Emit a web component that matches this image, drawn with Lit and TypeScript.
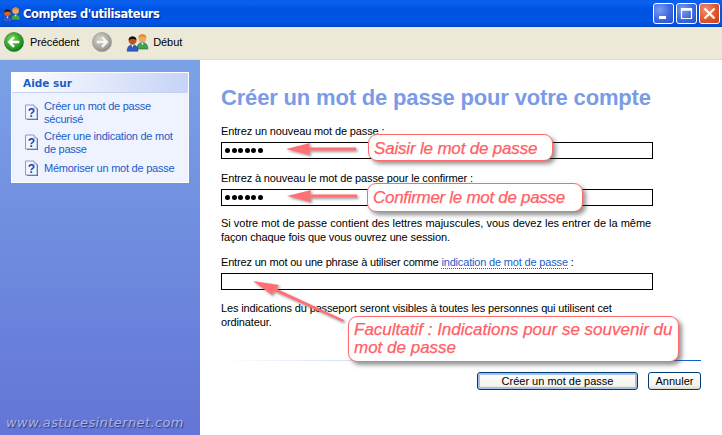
import { LitElement, html, css, svg } from "lit";
import { customElement } from "lit/decorators.js";

const person = (x: number, y: number, head: string, hair: string, body: string, s = 1) => svg`
  <g transform="translate(${x} ${y}) scale(${s})">
    <path d="M0.5 14.5 C0.5 10 3 8.5 5.5 8.5 C8 8.5 10.5 10 10.5 14.5 Z" fill="${body}" stroke="#234" stroke-width=".4"/>
    <path d="M4.5 8.8 L5.5 11 L6.5 8.8 Z" fill="#fff"/>
    <circle cx="5.5" cy="4.5" r="3.6" fill="${head}"/>
    <path d="M1.9 4.5 A3.6 3.6 0 0 1 9.1 4.5 C7.5 2.8 4 2.8 1.9 4.5 Z" fill="${hair}"/>
  </g>`;

const users = (size: number) => html`<svg class="ti" width=${size} height=${size} viewBox="0 0 22 22">
  ${person(9.5, 3, "#f0a860", "#e08a30", "#3fa44a")}
  ${person(0.5, 5, "#d8651c", "#111", "#3558c8")}
</svg>`;

const helpIcon = html`<svg class="hi" width="16" height="18" viewBox="0 0 16 18">
  <path d="M3 2 H11 L14 5 V16 H3 Z" fill="#4a5a78"/>
  <path d="M1.5 1 H10 L13 4 V15 H1.5 Z" fill="#f2f6ff" stroke="#8a9cc0" stroke-width="1"/>
  <path d="M10 1 V4 H13" fill="#d5def0" stroke="#8a9cc0" stroke-width=".7"/>
  <text x="7.2" y="13.4" text-anchor="middle" font-family="Liberation Sans" font-weight="700" font-size="12" fill="#1c3fae">?</text>
</svg>`;

@customElement("app-root")
export class AppRoot extends LitElement {
  static styles = css`
    :host { display: block; width: 722px; height: 435px; position: relative; overflow: hidden; background: #fff;
      font-family: "Liberation Sans", Arial, sans-serif; font-size: 11px; color: #000; }
    .title { height: 27px; box-sizing: border-box; display: flex; align-items: center; padding: 0 2px 0 2px;
      background: linear-gradient(180deg, #0a5ce8 0%, #0a62f0 10%, #0054e3 30%, #0054e3 80%, #0050d8 92%, #0042c0 100%); }
    .ti { margin-right: 1px; }
    .title b { font-family: "DejaVu Sans", sans-serif; font-size: 11.5px; color: #fff; font-weight: 700; letter-spacing: -.46px; text-shadow: 1px 1px 1px #00208a; flex: 1; }
    .wb { width: 21px; height: 21px; box-sizing: border-box; border: 1px solid #fff; border-radius: 3px; margin-left: 2px;
      background: radial-gradient(circle at 30% 30%, #7d9cf0 0%, #3c68e0 55%, #2a50c8 100%); display: flex; align-items: center; justify-content: center; }
    .wb.x { background: radial-gradient(circle at 30% 30%, #ee9070 0%, #e0562c 55%, #c83c14 100%); }
    .tool { height: 33px; box-sizing: border-box; background: #ece9d8; border-bottom: 1px solid #e0dcc4; display: flex; align-items: center; padding: 0 0 2px 4px; font-size: 11px; letter-spacing: -.1px; }
    .tool span { margin-left: 6px; }
    .tool .fw { margin-left: 13px; }
    .tool .us { margin-left: 14px; }
    .tool .deb { margin-left: 3px; }
    .main { display: flex; height: 375px; }
    .side { width: 200px; flex: none; box-sizing: border-box; padding: 12px 11px; background: linear-gradient(180deg, #7ba2e7 0%, #6375d6 100%); position: relative; }
    .panel { border: 1px solid #fff; background: #eff3ff; height: 111px; box-sizing: border-box; }
    .panel h3 { margin: 0; height: 20px; box-sizing: border-box; padding: 4px 0 0 11px; font-family: "DejaVu Sans", sans-serif; font-size: 10.5px; font-weight: 700; color: #215dc6;
      background: linear-gradient(90deg, #fff 0%, #c6d3f7 100%); border-bottom: 1px solid #c6d3f7; }
    .panel ul { list-style: none; margin: 0; padding: 7px 0 0 12px; }
    .panel li { display: flex; gap: 4px; color: #215dc6; line-height: 13px; width: 158px; margin-bottom: 4px; letter-spacing: -.24px; }
    .hi { flex: none; margin-top: 4px; }
    .panel li.one { align-items: center; }
    .panel li.one .hi { margin-top: 0; }
    .panel li.one div { margin-top: -1px; }
    .wm { position: absolute; left: 6px; bottom: 5px; font-family: "DejaVu Sans", sans-serif; font-style: italic; font-size: 13px; color: #a9b4e6; letter-spacing: .4px; text-shadow: 1px 1px 1px #2e3a7c; }
    .content { flex: 1; padding: 24px 21px 0; position: relative; }
    h1 { margin: 0; font-size: 22px; line-height: 28px; font-weight: 700; color: #7b9be6; letter-spacing: -.17px; white-space: nowrap; }
    .lbl { margin-top: 12px; line-height: 14px; letter-spacing: -.13px; white-space: nowrap; }
    .lbl.l3 { margin-top: 11px; letter-spacing: -.17px; }
    .inp { width: 432px; height: 17px; box-sizing: border-box; border: 1px solid #000; margin-top: 4px; padding-left: 3px; display: flex; align-items: center; gap: 1.6px; }
    .dot { width: 5px; height: 5px; background: #000; border-radius: 50%; }
    .p { width: 460px; line-height: 14px; margin-top: 10px; white-space: nowrap; }
    .p.p2 { margin-top: 11px; }
    .p span { display: block; letter-spacing: -.13px; }
    .p span.w { letter-spacing: -.01px; }
    .a { color: #215dc6; border-bottom: 1px dotted #215dc6; }
    .rule { height: 1px; width: 480px; margin-top: 31px; background: linear-gradient(90deg, #fff 0%, #a8c4f0 55%, #0a5ad8 100%); }
    .btns { display: flex; justify-content: flex-end; gap: 10px; width: 480px; margin-top: 11px; }
    .btn { height: 18px; box-sizing: border-box; border: 1px solid #003c74; border-radius: 3px; background: linear-gradient(180deg, #fff, #f4f3ec 80%, #dcd8c8); display: flex; align-items: center; justify-content: center; color: #000; }
    .btn.def { width: 161px; box-shadow: inset 0 0 0 2px #a5bfe8; }
    .btn.can { width: 53px; }
    .arrows { position: absolute; left: 0; top: 0; pointer-events: none; }
    .call { position: absolute; box-sizing: border-box; background: #fff; border: 1px solid #ff6a6a; border-radius: 9px; box-shadow: 3px 3px 4px rgba(60,60,60,.55);
      color: #ff6066; font-style: italic; font-size: 17px; line-height: 18px; white-space: nowrap; -webkit-text-stroke: .25px #ff6066; }
    .c1 { left: 368px; top: 134px; width: 185px; height: 27px; padding: 5px 0 0 5px; letter-spacing: -.18px; }
    .c2 { left: 367px; top: 183px; width: 216px; height: 29px; padding: 5px 0 0 5px; letter-spacing: -.3px; }
    .c3 { left: 348px; top: 316px; width: 331px; height: 46px; padding: 4px 0 0 5px; }
  `;

  private dots() {
    return html`<div class="inp">${[0, 1, 2, 3, 4, 5].map(() => html`<i class="dot"></i>`)}</div>`;
  }

  render() {
    return html`
      <div class="title">
        ${users(20)}
        <b>Comptes d'utilisateurs</b>
        <div class="wb"><svg width="13" height="13" viewBox="0 0 13 13"><rect x="2" y="9" width="7" height="3" fill="#fff"/></svg></div>
        <div class="wb"><svg width="13" height="13" viewBox="0 0 13 13"><path d="M1.5 1.5 H11.5 V11.5 H1.5 Z M1.5 3 H11.5" fill="none" stroke="#fff" stroke-width="1.2"/><rect x="1" y="1" width="11" height="2.5" fill="#fff"/></svg></div>
        <div class="wb x"><svg width="13" height="13" viewBox="0 0 13 13"><path d="M1.5 1.5 L11.5 11.5 M11.5 1.5 L1.5 11.5" stroke="#fff" stroke-width="2.2"/></svg></div>
      </div>
      <div class="tool">
        <svg width="20" height="20" viewBox="0 0 21 21">
          <defs><radialGradient id="g" cx=".4" cy=".35" r=".7"><stop offset="0" stop-color="#7fd85a"/><stop offset=".65" stop-color="#2ba02a"/><stop offset="1" stop-color="#0c6e14"/></radialGradient></defs>
          <circle cx="10.5" cy="10.5" r="10" fill="url(#g)" stroke="#1b6a1b" stroke-width=".6"/>
          <path d="M16 10.5 H6 M10.5 5.5 L5.5 10.5 L10.5 15.5" fill="none" stroke="#fff" stroke-width="2.6"/>
        </svg>
        <span>Précédent</span>
        <svg class="fw" width="20" height="20" viewBox="0 0 21 21">
          <defs><radialGradient id="h" cx=".4" cy=".35" r=".7"><stop offset="0" stop-color="#d4d4cc"/><stop offset=".7" stop-color="#a6a69e"/><stop offset="1" stop-color="#86867e"/></radialGradient></defs>
          <circle cx="10.5" cy="10.5" r="10" fill="url(#h)" stroke="#8c8c84" stroke-width=".6"/>
          <path d="M5 10.5 H15 M10.5 5.5 L15.5 10.5 L10.5 15.5" fill="none" stroke="#f4f4f0" stroke-width="2.6"/>
        </svg>
        <svg class="us" width="24" height="24" viewBox="0 0 22 22">
          ${person(9.5, 3, "#f0a860", "#e08a30", "#3fa44a")}
          ${person(0.5, 5, "#c8501a", "#111", "#3558c8")}
        </svg>
        <span class="deb">Début</span>
      </div>
      <div class="main">
        <div class="side">
          <div class="panel">
            <h3>Aide sur</h3>
            <ul>
              <li>${helpIcon}<div>Créer un mot de passe sécurisé</div></li>
              <li>${helpIcon}<div>Créer une indication de mot de passe</div></li>
              <li class="one">${helpIcon}<div>Mémoriser un mot de passe</div></li>
            </ul>
          </div>
          <div class="wm">www.astucesinternet.com</div>
        </div>
        <div class="content">
          <h1>Créer un mot de passe pour votre compte</h1>
          <div class="lbl">Entrez un nouveau mot de passe :</div>
          ${this.dots()}
          <div class="lbl">Entrez à nouveau le mot de passe pour le confirmer :</div>
          ${this.dots()}
          <div class="p"><span class="w">Si votre mot de passe contient des lettres majuscules, vous devez les entrer de la même</span><span>façon chaque fois que vous ouvrez une session.</span></div>
          <div class="lbl l3">Entrez un mot ou une phrase à utiliser comme <span class="a">indication de mot de passe</span> :</div>
          <div class="inp"></div>
          <div class="p p2"><span>Les indications du passeport seront visibles à toutes les personnes qui utilisent cet</span><span>ordinateur.</span></div>
          <div class="rule"></div>
          <div class="btns"><div class="btn def">Créer un mot de passe</div><div class="btn can">Annuler</div></div>
        </div>
      </div>
      <svg class="arrows" width="722" height="435" viewBox="0 0 722 435">
        <defs><filter id="s" x="-20%" y="-50%" width="140%" height="200%"><feDropShadow dx="1.5" dy="1.5" stdDeviation="1.2" flood-color="#444" flood-opacity=".55"/></filter></defs>
        <g fill="#ff7074" filter="url(#s)">
          <path d="M286 149 L310 143 L309 147.5 L356 147.5 V150.5 L309 150.5 L310 155 Z"/>
          <path d="M287 196 L311 190 L310 194.5 L357 194.5 V197.5 L310 197.5 L311 202 Z"/>
          <path d="M253 281 L279 285 L276 288.5 L344 320 L343 322 L274 291 L272 295 Z"/>
        </g>
      </svg>
      <div class="call c1">Saisir le mot de passe</div>
      <div class="call c2">Confirmer le mot de passe</div>
      <div class="call c3">Facultatif : Indications pour se souvenir du<br>mot de passe</div>
    `;
  }
}
